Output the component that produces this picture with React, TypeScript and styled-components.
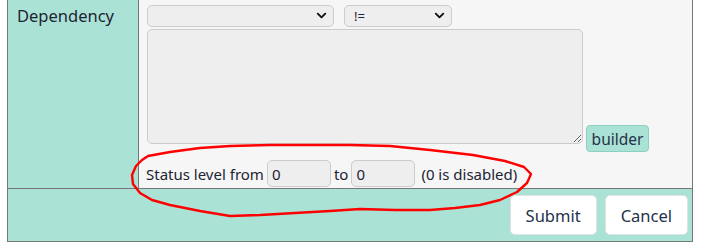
import styled, { createGlobalStyle } from "styled-components";
import { ChevronDown } from "lucide-react";

const GlobalStyle = createGlobalStyle`
  html, body {
    margin: 0;
    padding: 0;
    background: #ffffff;
  }
  body {
    font-family: "Noto Sans", "Open Sans", sans-serif;
    color: #1d2433;
  }
`;

const annotation = [
  [148, 156], [170, 152], [200, 148], [230, 146], [270, 145], [310, 145],
  [350, 145], [390, 146], [430, 150], [473, 155], [505, 161], [524, 167],
  [531, 174], [527, 183], [517, 192], [500, 200], [480, 205], [455, 208],
  [430, 210], [395, 210], [360, 209], [330, 211], [295, 213], [260, 215],
  [230, 216], [200, 211], [170, 205], [152, 200], [140, 193], [133, 184],
  [132, 175], [136, 166], [142, 160], [148, 156],
];

const App = () => {
  return (
    <Page>
      <GlobalStyle />
      <FormTable>
        <Row>
          <Label>Dependency</Label>
          <Value>
            <SelectLine>
              <SelectWrap width={187}>
                <Select defaultValue="">
                  <option value=""></option>
                </Select>
                <Chevron size={15} strokeWidth={3} />
              </SelectWrap>
              <SelectWrap width={108}>
                <Select defaultValue="!=">
                  <option value="!=">!=</option>
                  <option value="==">==</option>
                </Select>
                <Chevron size={15} strokeWidth={3} />
              </SelectWrap>
            </SelectLine>
            <EditorLine>
              <TextArea />
              <BuilderButton>builder</BuilderButton>
            </EditorLine>
            <StatusLine>
              <span>Status level from</span>
              <NumberInput defaultValue="0" />
              <span>to</span>
              <NumberInput defaultValue="0" />
              <Hint>(0 is disabled)</Hint>
            </StatusLine>
          </Value>
        </Row>
        <Footer>
          <ActionButton>Submit</ActionButton>
          <ActionButton>Cancel</ActionButton>
        </Footer>
      </FormTable>
      <Scribble width="701" height="244" viewBox="0 0 701 244">
        <polyline
          points={annotation.map((p) => p.join(",")).join(" ")}
          fill="none"
          stroke="#ff0000"
          strokeWidth="2.4"
          strokeLinejoin="round"
          strokeLinecap="round"
        />
      </Scribble>
    </Page>
  );
};

export default App;

const Page = styled.div`
  position: relative;
  width: 701px;
  height: 244px;
  padding-left: 7px;
  box-sizing: border-box;
`;

const FormTable = styled.div`
  width: 686px;
  box-sizing: border-box;
  border: 1px solid #777777;
  border-top: none;
`;

const Row = styled.div`
  display: grid;
  grid-template-columns: 131px 1fr;
  height: 189px;
  border-bottom: 1px solid #777777;
  box-sizing: border-box;
`;

const Label = styled.div`
  background: #aae3d5;
  border-right: 1px solid #777777;
  padding: 5px 0 0 9px;
  font-size: 16.5px;
  line-height: 22px;
`;

const Value = styled.div`
  background: #f6f6f6;
  padding: 4px 0 0 8px;
  display: flex;
  flex-direction: column;
`;

const SelectLine = styled.div`
  display: flex;
  gap: 10px;
`;

const SelectWrap = styled.div<{ width: number }>`
  position: relative;
  width: ${(props) => props.width}px;
  height: 22px;
`;

const Select = styled.select`
  appearance: none;
  width: 100%;
  height: 100%;
  box-sizing: border-box;
  border: 1px solid #cccccc;
  border-radius: 5px;
  background: #eeeeee;
  font-family: "Noto Sans", sans-serif;
  font-size: 13px;
  color: #1d2433;
  padding: 0 0 0 9px;
`;

const Chevron = styled(ChevronDown)`
  position: absolute;
  right: 5px;
  top: 4px;
  color: #111111;
  pointer-events: none;
`;

const EditorLine = styled.div`
  display: flex;
  align-items: flex-start;
  margin-top: 3px;
  height: 123px;
`;

const TextArea = styled.textarea`
  width: 436px;
  height: 115px;
  box-sizing: border-box;
  border: 1px solid #cccccc;
  border-radius: 5px;
  background: #eeeeee;
  resize: both;
  margin: 0;
`;

const BuilderButton = styled.button`
  margin: 96px 0 0 3px;
  height: 27px;
  width: 63px;
  box-sizing: border-box;
  background: #aae3d5;
  border: 1px solid #8fcfc0;
  border-radius: 4px;
  font-family: "Noto Sans", sans-serif;
  font-size: 15.5px;
  color: #24324a;
  padding: 0;
`;

const StatusLine = styled.div`
  display: flex;
  align-items: center;
  gap: 3px;
  margin-top: 8px;
  margin-left: -1px;
  font-size: 15px;
`;

const NumberInput = styled.input`
  width: 64px;
  height: 27px;
  box-sizing: border-box;
  border: 1px solid #cccccc;
  border-radius: 5px;
  background: #eeeeee;
  font-family: "Noto Sans", sans-serif;
  font-size: 15px;
  color: #1d2433;
  padding: 0 4px;
`;

const Hint = styled.span`
  margin-left: 3px;
`;

const Footer = styled.div`
  background: #aae3d5;
  height: 52px;
  display: flex;
  justify-content: flex-end;
  align-items: flex-start;
  gap: 8px;
  padding: 6px 4px 0 0;
  box-sizing: border-box;
`;

const ActionButton = styled.button`
  height: 40px;
  padding: 0 15px;
  background: #ffffff;
  border: 1px solid #e2e2e2;
  border-radius: 5px;
  font-family: "Noto Sans", sans-serif;
  font-size: 16.5px;
  color: #24324a;
`;

const Scribble = styled.svg`
  position: absolute;
  left: 0;
  top: 0;
  pointer-events: none;
`;
